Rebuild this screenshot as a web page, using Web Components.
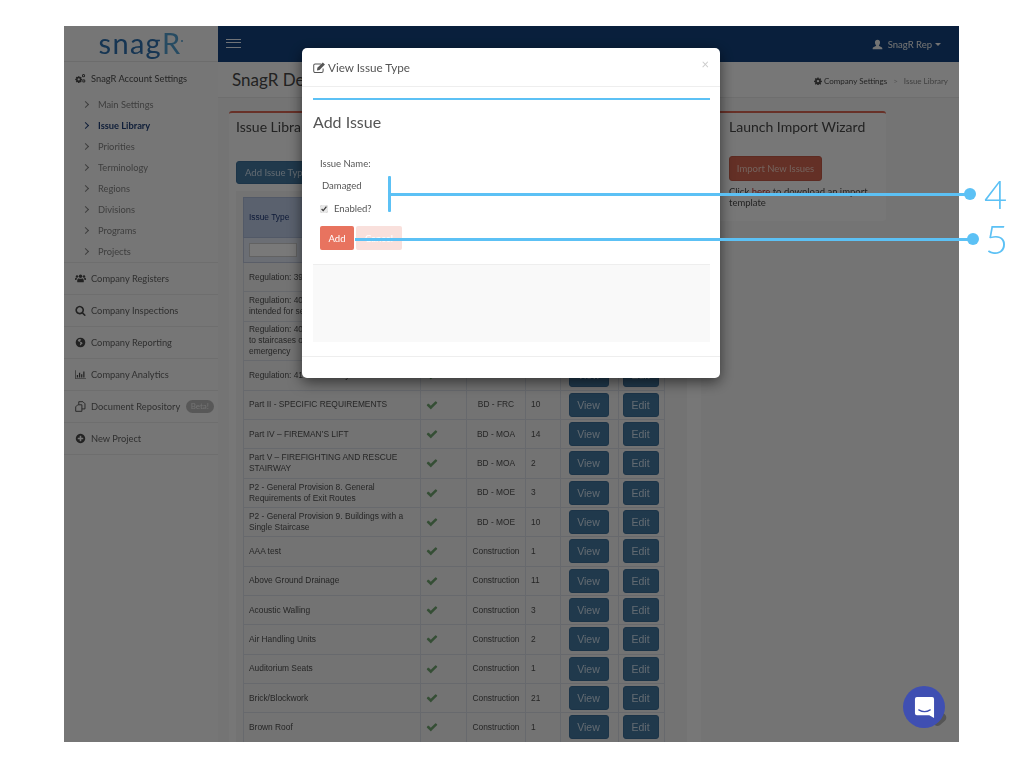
<!DOCTYPE html>
<html>
<head>
<meta charset="utf-8">
<title>SnagR</title>
<style>
  html, body { margin: 0; padding: 0; background: #fff; }
  body { position: relative; width: 1024px; height: 768px; overflow: hidden; font-family: Lato, "Liberation Sans", sans-serif; }
</style>
</head>
<body>
<sn-app></sn-app>
<sn-callout number="4" style="left:388px;top:176px;width:582px;height:36px" bar line-y="18"></sn-callout>
<sn-callout number="5" offset="12" style="left:355px;top:221px;width:618px;height:36px" line-y="18"></sn-callout>

<script>
const ICONS = {
  check: ['0 0 1792 1792', '<path d="M1671 566q0 40-28 68l-724 724-136 136q-28 28-68 28t-68-28l-136-136-362-362q-28-28-28-68t28-68l136-136q28-28 68-28t68 28l294 295 656-657q28-28 68-28t68 28l136 136q28 28 28 68z"/>'],
  plus: ['0 0 1792 1792', '<path d="M1344 960v-128q0-26-19-45t-45-19h-256v-256q0-26-19-45t-45-19h-128q-26 0-45 19t-19 45v256h-256q-26 0-45 19t-19 45v128q0 26 19 45t45 19h256v256q0 26 19 45t45 19h128q26 0 45-19t19-45v-256h256q26 0 45-19t19-45zm320-64q0 209-103 385.5t-279.5 279.5-385.5 103-385.5-103-279.5-279.5-103-385.5 103-385.5 279.5-279.5 385.5-103 385.5 103 279.5 279.5 103 385.5z"/>'],
  search: ['0 0 1792 1792', '<path d="M1216 832q0-185-131.5-316.5t-316.5-131.5-316.5 131.5-131.5 316.5 131.5 316.5 316.5 131.5 316.5-131.5 131.5-316.5zm512 832q0 52-38 90t-90 38q-54 0-90-38l-343-342q-179 124-399 124-143 0-273.5-55.5t-225-150-150-225-55.5-273.5 55.5-273.5 150-225 225-150 273.5-55.5 273.5 55.5 225 150 150 225 55.5 273.5q0 220-124 399l343 343q37 37 37 90z"/>'],
  users: ['0 0 20 16', '<circle cx="10" cy="4" r="3.2"/><circle cx="3.6" cy="4.4" r="2.2"/><circle cx="16.4" cy="4.4" r="2.2"/><path d="M5 15c-.6 0-1-.4-1-1v-2.5C4 9 5.500 7.800 7 7.800c1 .8 5 .8 6 0 1.500 0 3 1.200 3 3.700V14c0 .6-.4 1-1 1z"/><path d="M0 11V9c0-1.500 1-2.400 2-2.400.6.400 1.300.6 2 .5-.8.8-1.300 2-1.300 3.500H1c-.6 0-1-.1-1-.6zM20 11V9c0-1.500-1-2.400-2-2.400-.6.400-1.300.6-2 .5.800.8 1.300 2 1.300 3.500H19c.6 0 1-.1 1-.6z"/>'],
  globe: ['0 0 16 16', '<path fill-rule="evenodd" d="M8 1a7 7 0 1 1 0 14A7 7 0 0 1 8 1zM6.500 3 4 4.500l1 2 2 .5 1 2-1 2 1 1.500 1.500-2 1.500-1-1-2-2.500-.5-.5-1.500 1.500-.5.500-1.500z"/>'],
  chart: ['0 0 18 16', '<path d="M0 1h1v13h17v1H0z"/><path d="M3 9h2v4H3zM6.500 5h2v8h-2zM10 7.500h2V13h-2zM13.500 3h2v10h-2z"/>'],
  files: ['0 0 16 16', '<path fill="none" stroke="currentColor" stroke-width="1.300" d="M5.500 5V1h6l3 3v7.500H10"/><path fill="none" stroke="currentColor" stroke-width="1.300" d="M1 8.500 4 5.500h6V15H1z"/>'],
  user: ['0 0 16 16', '<path d="M8 1c2.300 0 3.700 1.600 3.700 4 0 1.600-.7 3-1.500 3.800-.4.500-.3 1.200.3 1.500l3.500 1.700c.6.300 1 .7 1 1.500V15H1v-1.500c0-.8.4-1.200 1-1.500l3.500-1.700c.6-.3.700-1 .3-1.500C5 8 4.300 6.600 4.300 5 4.300 2.600 5.700 1 8 1z"/>'],
  edit: ['0 0 18 16', '<path fill="none" stroke="currentColor" stroke-width="1.400" d="M14 9.500V13a2 2 0 0 1-2 2H3a2 2 0 0 1-2-2V5a2 2 0 0 1 2-2h8"/><path d="M6 8.500 13.500 1l3 3L9 11.500l-3.500.5z"/>'],
  gear: ['0 0 16 16', '<path fill-rule="evenodd" d="M6.800 1h2.400l.4 2 1.300.6 1.800-1.100 1.700 1.700-1.100 1.800.6 1.300 2 .4v2.400l-2 .4-.6 1.300 1.100 1.800-1.700 1.700-1.800-1.100-1.300.6-.4 2H6.800l-.4-2-1.300-.6-1.800 1.100-1.700-1.700 1.100-1.800-.6-1.300-2-.4V7.300l2-.4.6-1.300-1.100-1.800 1.700-1.700 1.800 1.100 1.300-.6zM8 5.800a2.400 2.400 0 1 0 0 4.800 2.400 2.400 0 0 0 0-4.800z"/>'],
  cogs: ['0 0 20 16', '<path fill-rule="evenodd" d="M5.500 3.800h2.600l.3 1.400 1 .5 1.300-.7 1.400 1.500-.8 1.200.4 1 1.500.3v2.100l-1.500.3-.4 1 .8 1.200-1.400 1.500-1.300-.7-1 .4-.3 1.500H5.500l-.3-1.500-1-.4-1.300.7L1.500 13.200l.8-1.200-.4-1-1.500-.3V8.600l1.500-.3.4-1-.8-1.200 1.400-1.500 1.300.7 1-.5zM6.800 7.500a2.100 2.100 0 1 0 0 4.200 2.100 2.100 0 0 0 0-4.200z"/><path fill-rule="evenodd" d="M15.500 0a2.600 2.600 0 1 1 0 5.800 2.600 2.600 0 0 1 0-5.800zm0 1.700a1.100 1.100 0 1 0 0 2.300 1.100 1.100 0 0 0 0-2.300zM16 9.500a2.600 2.600 0 1 1 0 5.800 2.600 2.600 0 0 1 0-5.800zm0 1.700a1.100 1.100 0 1 0 0 2.300 1.100 1.100 0 0 0 0-2.300z"/>']
};

class SnIcon extends HTMLElement {
  connectedCallback() {
    const [box, body] = ICONS[this.getAttribute('name')];
    const size = this.getAttribute('size') || 10;
    this.attachShadow({ mode: 'open' }).innerHTML = `
      <style>:host { display: inline-flex; align-items: center; justify-content: center; } svg { display: block; fill: currentColor; }</style>
      <svg viewBox="${box}" width="${size}" height="${size}">${body}</svg>`;
  }
}
customElements.define('sn-icon', SnIcon);

// one row in the left menu
class SnNavItem extends HTMLElement {
  connectedCallback() {
    const icon = this.getAttribute('icon');
    const chevron = this.hasAttribute('sub');
    this.attachShadow({ mode: 'open' }).innerHTML = `
      <style>
        :host { display: flex; align-items: center; box-sizing: border-box; height: 32px; padding: 0 0 0 11px; border-bottom: 1px solid #dcdcdc; color: #5f5f5f; font-size: 9.300px; }
        :host([sub]) { height: 21px; border: 0; padding: 0 0 0 19px; color: #7c7c7c; }
        :host([active]) { color: #1f3d72; font-weight: 700; }
        :host([head]) { color: #4a4a4a; border: 0; }
        sn-icon { width: 11px; margin-right: 5px; color: #444; }
        .chev { width: 4px; height: 4px; margin-right: 10px; border-top: 1px solid currentColor; border-right: 1px solid currentColor; transform: rotate(45deg); }
        .badge { margin-left: auto; margin-right: 4px; padding: 1px 5px; border-radius: 7px; background: #b0b0b0; color: #e4e4e4; font-size: 8px; line-height: 11px; }
      </style>
      ${chevron ? '<span class="chev"></span>' : ''}
      ${icon ? `<sn-icon name="${icon}" size="11"></sn-icon>` : ''}
      <slot></slot>
      ${this.hasAttribute('badge') ? `<span class="badge">${this.getAttribute('badge')}</span>` : ''}`;
  }
}
customElements.define('sn-nav-item', SnNavItem);

class SnSidebar extends HTMLElement {
  constructor() {
    super();
    const subs = ['Main Settings', 'Issue Library', 'Priorities', 'Terminology', 'Regions', 'Divisions', 'Programs', 'Projects'];
    this.attachShadow({ mode: 'open' }).innerHTML = `
      <style>
        :host { display: block; width: 154px; background: #ececec; }
        .logo { display: flex; align-items: flex-start; justify-content: center; height: 36px; box-sizing: border-box; background: #ececec; border-bottom: 1px solid #d8d8d8; font-size: 29px; letter-spacing: 1.300px; line-height: 33px; color: #2c6ba6; }
        .logo b { font-weight: 400; color: #4f97c4; }
        .logo i { width: 2px; height: 2px; margin: 14px 0 0 0; border-radius: 50%; background: #4f97c4; }
        .subs { border-bottom: 1px solid #dcdcdc; padding-top: 1px; height: 199px; }
        sn-nav-item[head] { height: 31px; }
      </style>
      <div class="logo">snag<b>R</b><i></i></div>
      <div class="subs">
        <sn-nav-item head icon="cogs">SnagR Account Settings</sn-nav-item>
        ${subs.map(s => `<sn-nav-item sub ${s === 'Issue Library' ? 'active' : ''}>${s}</sn-nav-item>`).join('')}
      </div>
      <sn-nav-item icon="users">Company Registers</sn-nav-item>
      <sn-nav-item icon="search">Company Inspections</sn-nav-item>
      <sn-nav-item icon="globe">Company Reporting</sn-nav-item>
      <sn-nav-item icon="chart">Company Analytics</sn-nav-item>
      <sn-nav-item icon="files" badge="Beta!">Document Repository</sn-nav-item>
      <sn-nav-item icon="plus">New Project</sn-nav-item>`;
  }
}
customElements.define('sn-sidebar', SnSidebar);

class SnNavbar extends HTMLElement {
  constructor() {
    super();
    this.attachShadow({ mode: 'open' }).innerHTML = `
      <style>
        :host { display: flex; align-items: center; height: 36px; padding: 0 18px 2px 8px; box-sizing: border-box; background: #123f78; color: #dfe6ee; font-size: 9.500px; }
        .burger { width: 15px; height: 9px; border-top: 1.500px solid #e0e6ee; border-bottom: 1.500px solid #e0e6ee; position: relative; box-sizing: border-box; }
        .burger::after { content: ""; position: absolute; left: 0; right: 0; top: 2.200px; height: 1.500px; background: #e0e6ee; }
        .user { margin-left: auto; display: flex; align-items: center; gap: 5px; color: #e6e6e6; padding-top: 2px; }
        .caret { width: 0; height: 0; margin-left: -2px; border: 3px solid transparent; border-top-color: #e6e6e6; border-bottom: 0; }
      </style>
      <div class="burger"></div>
      <div class="user"><sn-icon name="user" size="11"></sn-icon><span>SnagR Rep</span><span class="caret"></span></div>`;
  }
}
customElements.define('sn-navbar', SnNavbar);

const ROWS = [
  ['Regulation: 39 - Means of escape', 'BD - FRC', 4],
  ['Regulation: 40 - Staircases and routes<br>intended for service use', 'BD - FRC', 6],
  ['Regulation: 40 - Means of escape and<br>to staircases or exits in case of<br>emergency', 'BD - FRC', 3, 39],
  ['Regulation: 41 - Fire safety', 'BD - FRC', 8, 30],
  ['Part II - SPECIFIC REQUIREMENTS', 'BD - FRC', 10],
  ['Part IV – FIREMAN’S LIFT', 'BD - MOA', 14],
  ['Part V – FIREFIGHTING AND RESCUE STAIRWAY', 'BD - MOA', 2],
  ['P2 - General Provision 8. General Requirements of Exit Routes', 'BD - MOE', 3],
  ['P2 - General Provision 9. Buildings with a Single Staircase', 'BD - MOE', 10],
  ['AAA test', 'Construction', 1],
  ['Above Ground Drainage', 'Construction', 11],
  ['Acoustic Walling', 'Construction', 3],
  ['Air Handling Units', 'Construction', 2],
  ['Auditorium Seats', 'Construction', 1],
  ['Brick/Blockwork', 'Construction', 21],
  ['Brown Roof', 'Construction', 1]
];

class SnIssueTable extends HTMLElement {
  constructor() {
    super();
    const rows = ROWS.map(r => `
      <tr style="height:${r[3] || 29.33}px">
        <td>${r[0]}</td>
        <td class="chk"><sn-icon name="check" size="12"></sn-icon></td>
        <td class="c">${r[1]}</td>
        <td>${r[2]}</td>
        <td class="c"><button style="width:40px">View</button></td>
        <td class="c"><button style="width:36px">Edit</button></td>
      </tr>`).join('');
    this.attachShadow({ mode: 'open' }).innerHTML = `
      <style>
        :host { display: block; font-family: "Liberation Sans", Arial, sans-serif; font-size: 8.400px; line-height: 11px; color: #4c4c4c; }
        table { border-collapse: collapse; table-layout: fixed; width: 421px; border: 1px solid #b4bcd0; }
        th, td { border: 1px solid #cfd2da; padding: 0 5px; text-align: left; font-weight: 400; }
        thead th { height: 39px; background: #b4c2dc; color: #1c3470; border-color: #a5b3cf; }
        .filter td { height: 24px; background: #d6dde9; padding: 0 5px; border-color: #b4bcd0; }
        .filter input { display: block; box-sizing: border-box; width: 48px; height: 14px; border: 1px solid #c4c4c4; background: #f2f2f2; padding: 0; }
        .c { text-align: center; padding: 0; }
        .chk { padding: 0 0 0 5px; }
        sn-icon { color: #6a9d6a; vertical-align: middle; }
        button { height: 24px; margin-left: -2px; padding: 0; border: 1px solid #386890; border-radius: 3px; background: #417399; color: #c4d4e2; font: 10.500px "Liberation Sans", Arial, sans-serif; vertical-align: middle; }
      </style>
      <table>
        <colgroup><col style="width:177px"><col style="width:46px"><col style="width:59px"><col style="width:35px"><col style="width:58px"><col style="width:46px"></colgroup>
        <thead><tr><th>Issue Type</th><th>Enabled</th><th>Type</th><th>No.</th><th></th><th></th></tr></thead>
        <tbody>
          <tr class="filter"><td><input></td><td></td><td></td><td></td><td></td><td></td></tr>
          ${rows}
        </tbody>
      </table>`;
  }
}
customElements.define('sn-issue-table', SnIssueTable);

class SnContent extends HTMLElement {
  constructor() {
    super();
    this.attachShadow({ mode: 'open' }).innerHTML = `
      <style>
        :host { display: block; flex: 1; min-width: 0; background: #e8e8e8; overflow: hidden; }
        .title { display: flex; align-items: center; justify-content: space-between; box-sizing: border-box; height: 36px; padding: 0 11px 0 14px; background: #eeeeee; border-bottom: 1px solid #dcdcdc; }
        h1 { margin: 0; font-size: 17px; font-weight: 400; color: #444; }
        .crumbs { display: flex; align-items: center; gap: 2px; font-size: 8px; color: #4a4a4a; padding-top: 2px; }
        .crumbs .sep { color: #aaa; margin: 0 4px 0 4px; }
        .crumbs .last { color: #828282; }
        .cols { display: flex; align-items: flex-start; padding: 13px 0 0 11px; }
        .card { box-sizing: border-box; background: #eeeeee; border-top: 2px solid #d06350; border-radius: 3px; }
        .issues { width: 465px; padding: 0 7px; }
        h2 { margin: 0; font-size: 14px; font-weight: 400; color: #444; line-height: 28px; }
        .issues h2 { height: 48px; }
        .strip { width: 7px; align-self: stretch; background: #eeeeee; }
        .add { display: block; box-sizing: border-box; width: 100px; height: 23px; border-radius: 3px; border: 1px solid #386890; background: #417399; color: #c4d4e2; font: 9.500px Lato, sans-serif; text-align: left; padding: 0 8px; }
        .panel { margin-top: 7px; padding: 6px 0 0 7px; background: #e6e6e6; }
        .wizard { width: 170px; height: 110px; margin-left: 15px; padding: 0 13px; font-size: 9.500px; color: #444; line-height: 11px; }
        .import { display: block; box-sizing: border-box; width: 93px; height: 25px; margin: 15px 0 5px; border: 1px solid #bb5744; border-radius: 3px; background: #c8604c; color: #e8c4b8; font: 9.500px Lato, sans-serif; padding: 0; }
        .wizard a { color: #b03030; }
      </style>
      <div class="title">
        <h1>SnagR Demo</h1>
        <div class="crumbs"><sn-icon name="gear" size="8"></sn-icon><span>Company Settings</span><span class="sep">&gt;</span><span class="last">Issue Library</span></div>
      </div>
      <div class="cols">
        <section class="card issues">
          <h2>Issue Library</h2>
          <button class="add">Add Issue Type</button>
          <div class="panel"><sn-issue-table></sn-issue-table></div>
        </section>
        <div class="strip"></div>
        <section class="card wizard">
          <h2>Launch Import Wizard</h2>
          <button class="import">Import New Issues</button>
          Click <a>here</a> to download an import template
        </section>
      </div>`;
  }
}
customElements.define('sn-content', SnContent);

class SnModal extends HTMLElement {
  constructor() {
    super();
    this.attachShadow({ mode: 'open' }).innerHTML = `
      <style>
        :host { position: absolute; left: 238px; top: 22px; width: 418px; height: 330px; box-sizing: border-box; background: #fff; border-radius: 5px; box-shadow: 0 4px 14px rgba(0,0,0,.55); color: #555; display: flex; flex-direction: column; }
        header { display: flex; align-items: center; gap: 2px; box-sizing: border-box; height: 39px; padding: 0 11px; border-bottom: 1px solid #eee; font-size: 11.700px; position: relative; color: #555; }
        .close { margin-left: auto; margin-top: -6px; color: #ccc; font-size: 13px; }
        main { flex: 1; padding: 11px 10px 0 11px; }
        .rule { height: 2px; background: #5cc1f5; }
        h3 { margin: 12px 0 0; font-size: 16px; font-weight: 400; line-height: 20px; color: #555; }
        form { padding: 26px 0 0 7px; font-size: 9.500px; color: #555; }
        .name { line-height: 12px; }
        .val { margin: 10px 0 0 2px; line-height: 12px; }
        label { display: flex; align-items: center; gap: 6px; margin-top: 11px; line-height: 12px; }
        input { width: 8px; height: 8px; margin: 0; accent-color: #e8e8e8; }
        .btns { display: flex; gap: 2px; margin-top: 11px; }
        button { height: 24px; padding: 0; border: 0; border-radius: 2px; font: 9.500px Lato, sans-serif; color: #fff; background: #e8735f; width: 34px; }
        button.cancel { width: 46px; background: #f9e0dc; }
        .log { height: 77px; margin-top: 14px; background: #f9f9f9; border-top: 1px solid #eee; }
        footer { height: 21px; border-top: 1px solid #eee; }
      </style>
      <header><sn-icon name="edit" size="13"></sn-icon>View Issue Type<span class="close">×</span></header>
      <main>
        <div class="rule"></div>
        <h3>Add Issue</h3>
        <form>
          <div class="name">Issue Name:</div>
          <div class="val">Damaged</div>
          <label><input type="checkbox" checked>Enabled?</label>
          <div class="btns"><button type="button">Add</button><button type="button" class="cancel">Cancel</button></div>
        </form>
        <div class="log"></div>
      </main>
      <footer></footer>`;
  }
}
customElements.define('sn-modal', SnModal);

class SnChat extends HTMLElement {
  constructor() {
    super();
    this.attachShadow({ mode: 'open' }).innerHTML = `
      <style>
        :host { position: absolute; left: 839px; top: 660px; width: 42px; height: 42px; border-radius: 50%; background: #3f4fb2; display: flex; align-items: center; justify-content: center; }
        :host::before { content: ""; position: absolute; z-index: -1; left: 29px; top: 29px; width: 15px; height: 9px; border-radius: 5px; background: #555; transform: rotate(-40deg); }
        svg { display: block; }
      </style>
      <svg width="21" height="23" viewBox="0 0 22 24"><path fill="#fff" d="M3 1h16a2 2 0 0 1 2 2v20l-5-3H3a2 2 0 0 1-2-2V3a2 2 0 0 1 2-2z"/><path fill="none" stroke="#3f4fb2" stroke-width="1.300" stroke-linecap="round" d="M5 14.500c3.500 2.200 8.500 2.200 12 0"/></svg>`;
  }
}
customElements.define('sn-chat', SnChat);

class SnApp extends HTMLElement {
  constructor() {
    super();
    this.attachShadow({ mode: 'open' }).innerHTML = `
      <style>
        :host { display: block; position: relative; width: 895px; height: 716px; margin: 26px 0 0 64px; overflow: hidden; font-family: Lato, "Liberation Sans", sans-serif; filter: blur(.3px); }
        .shell { display: flex; height: 100%; }
        .right { flex: 1; min-width: 0; display: flex; flex-direction: column; }
        .backdrop { position: absolute; inset: 0; background: rgba(0,0,0,.5); }
        .top { position: absolute; inset: 0; isolation: isolate; }
      </style>
      <div class="shell">
        <sn-sidebar></sn-sidebar>
        <div class="right"><sn-navbar></sn-navbar><sn-content></sn-content></div>
      </div>
      <div class="backdrop"></div>
      <div class="top"><sn-modal></sn-modal><sn-chat></sn-chat></div>`;
  }
}
customElements.define('sn-app', SnApp);

// annotation line with a dot and a big number at its right end
class SnCallout extends HTMLElement {
  connectedCallback() {
    const y = this.getAttribute('line-y');
    const gap = this.getAttribute('offset') || 14;
    this.attachShadow({ mode: 'open' }).innerHTML = `
      <style>
        :host { position: absolute; display: block; color: #5cc1f5; font-family: Lato, sans-serif; }
        .line { position: absolute; left: 0; right: 0; top: ${y - 1.5}px; height: 3px; background: currentColor; }
        .bar { position: absolute; left: 0; top: 0; bottom: 0; width: 3px; border-radius: 1px; background: currentColor; }
        .dot { position: absolute; right: -6px; top: ${y - 6}px; width: 12px; height: 12px; border-radius: 50%; background: currentColor; }
        .num { position: absolute; left: calc(100% + ${gap}px); top: ${y - 24}px; font-size: 40px; font-weight: 300; line-height: 48px; }
      </style>
      ${this.hasAttribute('bar') ? '<div class="bar"></div>' : ''}
      <div class="line"></div><div class="dot"></div>
      <div class="num">${this.getAttribute('number')}</div>`;
  }
}
customElements.define('sn-callout', SnCallout);
</script>
</body>
</html>
